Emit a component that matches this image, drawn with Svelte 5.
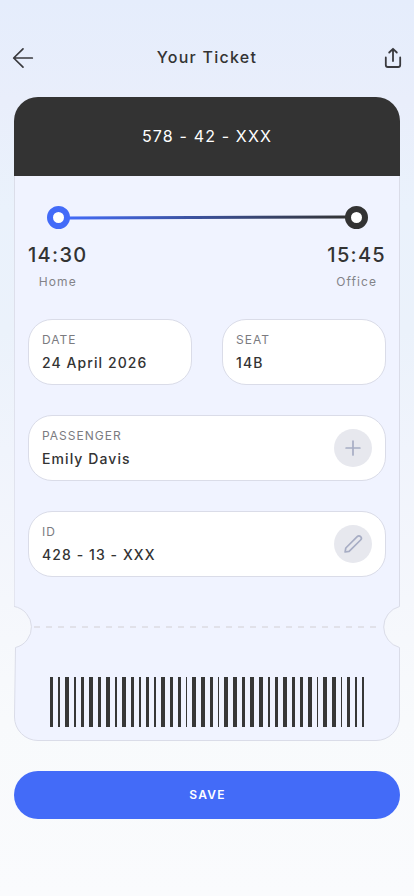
<script>
  const fields = [
    { label: "DATE", value: "24 April 2026" },
    { label: "SEAT", value: "14B" },
    { label: "PASSENGER", value: "Emily Davis", icon: "plus", wide: true },
    { label: "ID", value: "428 - 13 - XXX", icon: "pencil", wide: true }
  ];

  // bar widths, 5px between bars
  const bars = [..."3242343424323243314431443442343341441322"].map(Number);
</script>

<style>
  :global(body) {
    background: #fafbfd;
  }
  .screen {
    box-sizing: border-box;
    height: 896px;
    padding: 42px 14px 0;
    font-family: Inter, sans-serif;
    color: #333;
    background: linear-gradient(
      #e5edfc 0,
      #e9eefb 100px,
      #eaf2fc 210px,
      #ebf2fb 330px,
      #f0f4fc 450px,
      #f5f7fc 600px,
      #f8fafc 720px,
      #fafbfd 896px
    );
  }
  header {
    display: flex;
    align-items: center;
    justify-content: space-between;
    height: 31px;
    margin: 0 -4px 24px;
  }
  h1 {
    margin: 0 0 2px;
    font-size: 16px;
    font-weight: 500;
    letter-spacing: 1.25px;
  }
  .icon-btn {
    display: flex;
    width: 26px;
    height: 31px;
    padding: 0;
    border: 0;
    background: none;
    color: #3a3a3e;
  }
  svg {
    display: block;
    fill: none;
    stroke: currentColor;
    stroke-linecap: round;
    stroke-linejoin: round;
  }
  .ticket {
    position: relative;
    height: 644px;
  }
  .outline {
    position: absolute;
    top: 0;
    left: 0;
    fill: #f0f3ff;
    stroke: #dadce8;
  }
  .content {
    position: relative;
  }
  .number {
    box-sizing: border-box;
    display: flex;
    align-items: center;
    justify-content: center;
    height: 79px;
    padding-bottom: 2px;
    border-radius: 24px 24px 0 0;
    background: #333;
    color: #fff;
    font-size: 16px;
    letter-spacing: 1.15px;
  }
  .route {
    padding: 30px 32px 0 33px;
  }
  .times {
    display: flex;
    justify-content: space-between;
    padding: 0 14px;
    margin-top: 12px;
    text-align: center;
  }
  .time {
    font-size: 20px;
    line-height: 28px;
    font-weight: 500;
    letter-spacing: 1.3px;
  }
  .place {
    font-size: 12px;
    line-height: 16px;
    margin-top: 5px;
    letter-spacing: 1.1px;
    color: #838388;
  }
  .fields {
    display: grid;
    grid-template-columns: 1fr 1fr;
    gap: 30px;
    padding: 0 14px;
    margin-top: 29px;
  }
  .field {
    box-sizing: border-box;
    display: flex;
    align-items: center;
    justify-content: space-between;
    height: 66px;
    padding: 0 13px;
    border: 1px solid #dadce8;
    border-radius: 24px;
    background: #fff;
  }
  .wide {
    grid-column: span 2;
  }
  .text {
    padding-bottom: 2px;
  }
  .label {
    font-size: 12px;
    line-height: 20px;
    letter-spacing: 1px;
    color: #7b7b7f;
  }
  .value {
    font-size: 14px;
    line-height: 20px;
    margin-top: 3px;
    font-weight: 500;
    letter-spacing: 1.08px;
  }
  .round {
    display: flex;
    align-items: center;
    justify-content: center;
    width: 38px;
    height: 38px;
    padding: 0;
    border: 0;
    border-radius: 50%;
    background: #e7e8ee;
    color: #a7adc4;
  }
  .tear {
    height: 2px;
    margin: 49px 23px 0 20px;
    background: repeating-linear-gradient(
      90deg,
      #e1e1e9 0,
      #e1e1e9 6px,
      transparent 6px,
      transparent 12px
    );
  }
  .barcode {
    display: flex;
    justify-content: center;
    gap: 5px;
    height: 50px;
    margin-top: 49px;
  }
  .bar {
    background: #373737;
  }
  .save {
    display: block;
    width: 100%;
    height: 48px;
    margin-top: 30px;
    padding: 0 0 2px 1px;
    border: 0;
    border-radius: 24px;
    background: #436bf8;
    color: #fff;
    font: 600 12px Inter, sans-serif;
    letter-spacing: 1.2px;
  }
</style>

<div class="screen">
  <header>
    <button class="icon-btn" aria-label="Back">
      <svg width="26" height="31" stroke-width="1.7">
        <path d="M22.3 16H3.7M13 6.8L3.7 16L13 25.2" />
      </svg>
    </button>
    <h1>Your Ticket</h1>
    <button class="icon-btn" aria-label="Share">
      <svg width="26" height="31" stroke-width="1.8">
        <path d="M7.8 15.5V23Q7.8 25 9.8 25H20.2Q22.2 25 22.2 23V15.5M15 19V7M11.2 10.5L15 6.8L18.8 10.5" />
      </svg>
    </button>
  </header>

  <div class="ticket">
    <svg class="outline" width="386" height="644">
      <path
        d="M.5 24A23.5 23.5 0 0 1 24 .5H362A23.5 23.5 0 0 1 385.5 24V509.5A21.2 21.2 0 0 0 385.5 550.5V620A23.5 23.5 0 0 1 362 643.5H24A23.5 23.5 0 0 1 .5 620L1.5 550.5A21 21 0 0 0 .5 509.5Z" />
    </svg>

    <div class="content">
      <div class="number">578 - 42 - XXX</div>

      <div class="route">
        <svg width="321" height="23">
          <defs>
            <linearGradient id="route" gradientUnits="userSpaceOnUse" x1="20" x2="300" y1="0" y2="0">
              <stop offset="0" stop-color="#436bf8" />
              <stop offset="1" stop-color="#333" />
            </linearGradient>
          </defs>
          <path d="M20 12L300 11" stroke="url(#route)" stroke-width="3" />
          <circle cx="11.5" cy="11.5" r="8.5" fill="#fff" stroke="#436bf8" stroke-width="6" />
          <circle cx="309.5" cy="11.5" r="8.5" fill="#fff" stroke="#333" stroke-width="6" />
        </svg>
      </div>

      <div class="times">
        <div>
          <div class="time">14:30</div>
          <div class="place">Home</div>
        </div>
        <div>
          <div class="time">15:45</div>
          <div class="place">Office</div>
        </div>
      </div>

      <div class="fields">
        {#each fields as field}
          <div class="field" class:wide={field.wide}>
            <div class="text">
              <div class="label">{field.label}</div>
              <div class="value">{field.value}</div>
            </div>
            {#if field.icon}
              <button class="round" aria-label={field.icon === "plus" ? "Add passenger" : "Edit ID"}>
                <svg width="20" height="20" stroke-width="1.7">
                  {#if field.icon === "plus"}
                    <path d="M10 3.1V16.9M3.1 10H16.9" />
                  {:else}
                    <path d="M2.1 18L2.8 14L14.2 2.6A2.4 2.4 0 0 1 17.6 6L6.1 17.4Z" />
                  {/if}
                </svg>
              </button>
            {/if}
          </div>
        {/each}
      </div>

      <div class="tear"></div>

      <div class="barcode">
        {#each bars as width}
          <div class="bar" style="width: {width}px"></div>
        {/each}
      </div>
    </div>
  </div>

  <button class="save">SAVE</button>
</div>
